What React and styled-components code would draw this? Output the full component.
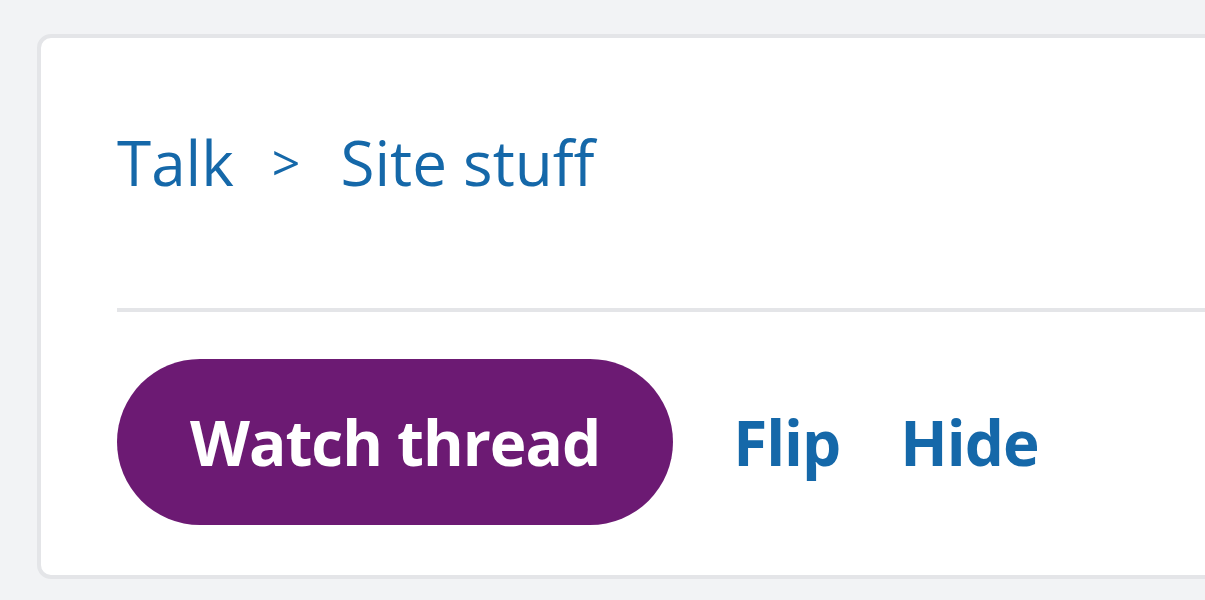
import React from 'react';
import styled, { createGlobalStyle } from 'styled-components';

const GlobalStyle = createGlobalStyle`
  html, body {
    margin: 0;
    padding: 0;
    background: #f2f3f5;
    overflow: hidden;
  }
  body {
    font-family: "Open Sans", "Noto Sans", sans-serif;
  }
`;

const Page = styled.div`
  padding: 34px 0 0 37px;
`;

const Card = styled.div`
  width: 1300px;
  background: #fff;
  border: 4px solid #e4e5e8;
  border-radius: 14px;
  padding: 0 0 50px 76px;
  box-sizing: border-box;
`;

const Breadcrumb = styled.nav`
  display: flex;
  align-items: center;
  height: 270px;
  padding-bottom: 22px;
  box-sizing: border-box;
  font-size: 62px;
  color: #1568a9;
`;

const Crumb = styled.a`
  color: inherit;
  text-decoration: none;
`;

const Sep = styled.span`
  margin: 0 40px 0 38px;
  font-size: 50px;
`;

const Divider = styled.hr`
  margin: 0;
  border: none;
  height: 4px;
  background: #e4e5e8;
`;

const Actions = styled.div`
  display: flex;
  align-items: center;
  gap: 60px;
  margin-top: 47px;
`;

const WatchButton = styled.button`
  height: 166px;
  padding: 0 73px;
  border: none;
  border-radius: 83px;
  background: #6c1a73;
  color: #fff;
  font-family: inherit;
  font-size: 62px;
  font-weight: 700;
  letter-spacing: -1px;
  cursor: pointer;
`;

const ActionLink = styled.a`
  color: #1568a9;
  font-size: 62px;
  font-weight: 700;
  letter-spacing: -1px;
  text-decoration: none;
`;

const App = () => {
  return (
    <>
      <GlobalStyle />
      <Page>
        <Card>
          <Breadcrumb>
            <Crumb href="#">Talk</Crumb>
            <Sep>&gt;</Sep>
            <Crumb href="#">Site stuff</Crumb>
          </Breadcrumb>
          <Divider />
          <Actions>
            <WatchButton>Watch thread</WatchButton>
            <ActionLink href="#">Flip</ActionLink>
            <ActionLink href="#">Hide</ActionLink>
          </Actions>
        </Card>
      </Page>
    </>
  );
};

export default App;
